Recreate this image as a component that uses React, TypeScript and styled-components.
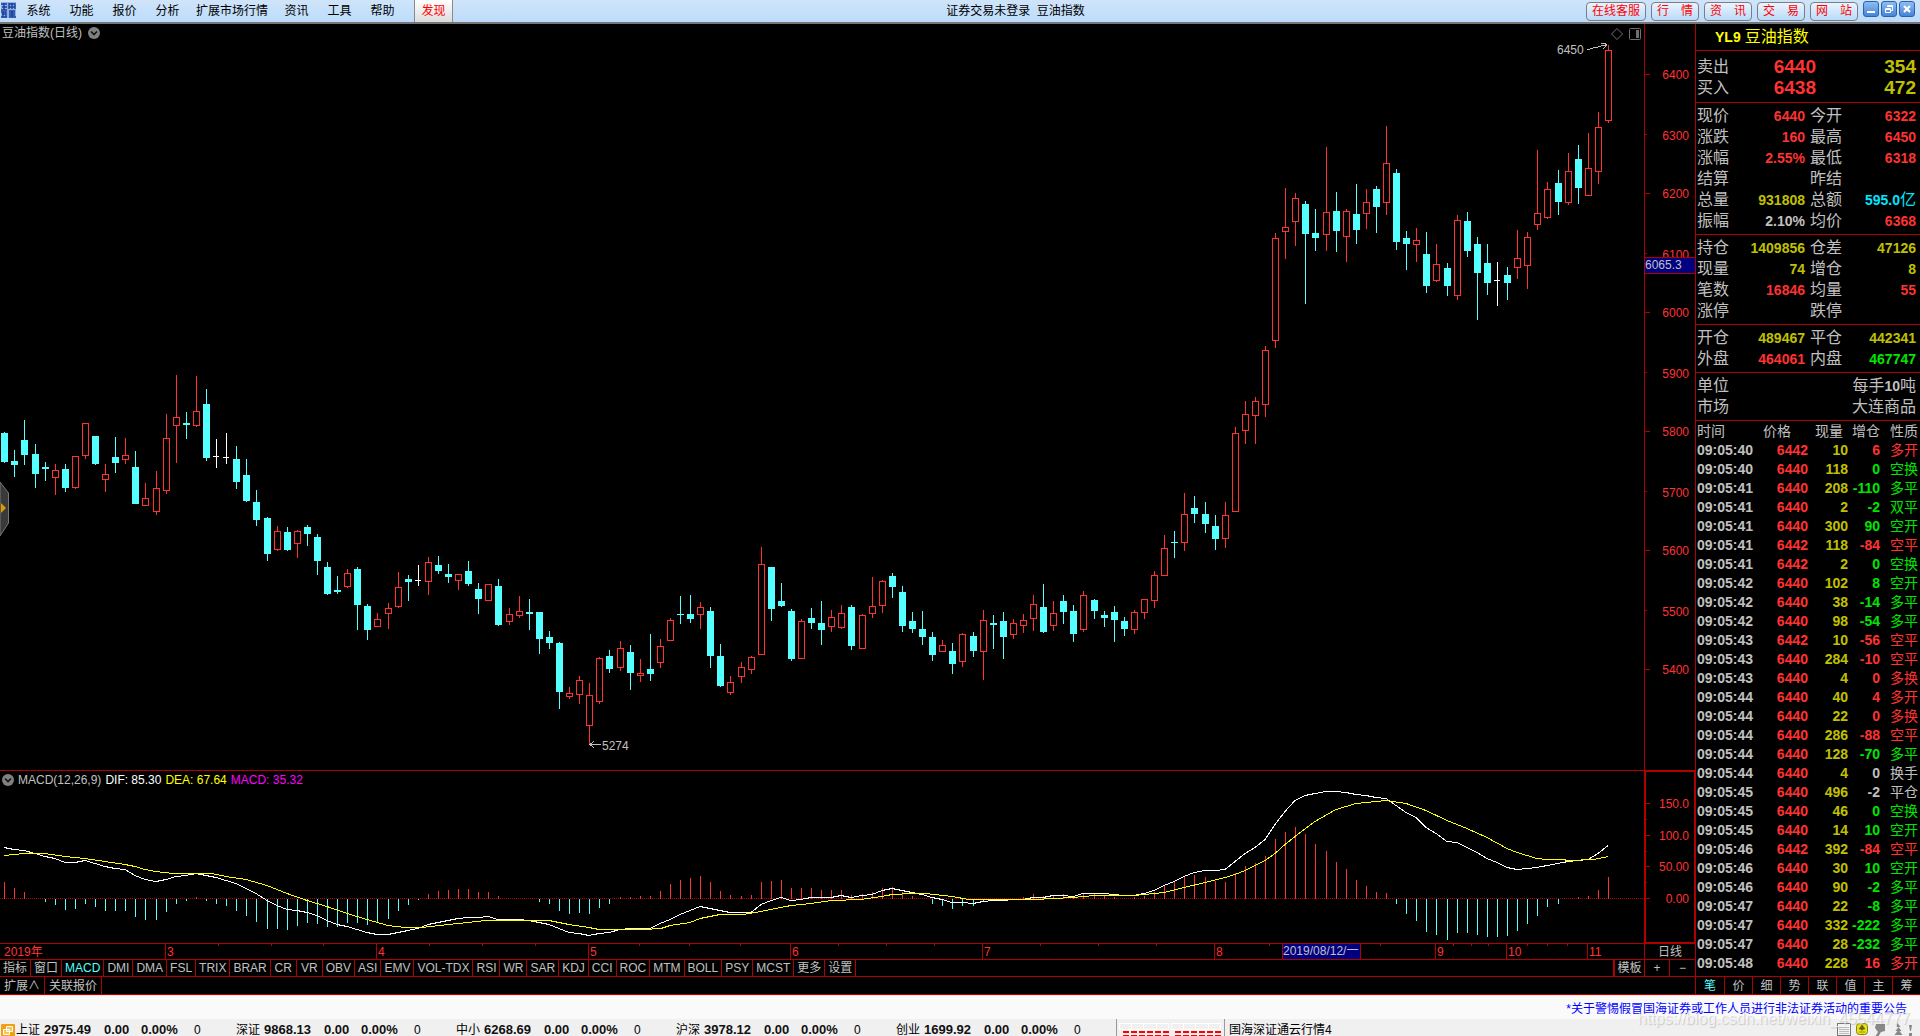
import React from 'react';
import styled, { createGlobalStyle } from 'styled-components';

const RED = '#b00000';
const UP = '#ff3232';
const DOWN = '#54ffff';
const GRAY = '#c0c0c0';
const YEL = '#c0c000';
const GREEN = '#00e600';
const FONT = '"Liberation Sans", "Noto Sans CJK SC", sans-serif';

const Global = createGlobalStyle`
  * { box-sizing: border-box; }
  body { margin: 0; background: #000; overflow: hidden; }
  button { font: inherit; color: inherit; background: none; border: 0; padding: 0; margin: 0; cursor: pointer; }
  svg { display: block; }
`;

/* ---------- data ---------- */

// u = rising, d = falling, n = unchanged; then high, body top, body bottom, low
const CANDLES = `d432,433,462,463 d450,461,465,477 d420,440,455,465 d444,454,474,488 d462,467,469,481
u464,470,478,495 d464,469,488,492 u456,456,488,489 u423,423,456,459 d436,436,464,465
u464,474,480,492 d437,457,463,473 u438,455,460,464 d451,467,504,504 u483,498,506,506
u471,488,512,515 u414,438,491,494 u375,417,426,463 d412,423,425,439 u376,411,426,427
d389,404,458,461 n439,456,457,468 n433,457,458,464 d446,459,482,489 d459,475,501,502
d490,502,520,526 d517,518,554,561 u526,531,550,551 d527,532,550,551 u530,531,544,558
d525,527,534,546 d534,537,561,575 d562,567,594,595 d576,590,592,594 u569,573,587,588
d567,569,605,630 d604,606,630,640 u613,619,627,627 u603,608,614,629 u572,587,607,608
d575,579,582,601 n565,580,581,586 u557,562,582,595 d556,565,571,574 d564,574,577,583
u574,574,581,590 d561,571,584,586 d583,589,599,614 u584,584,601,601 d579,586,625,626
u608,614,622,625 u596,611,616,618 d599,612,614,630 d612,612,639,654 d631,637,643,649
d642,643,692,709 u687,693,697,699 u676,680,695,704 u683,695,726,744 u657,658,702,704
d650,656,669,673 u641,648,668,671 d645,652,673,690 u659,673,676,682 d634,669,674,681
u639,646,663,668 u618,620,641,641 d596,614,615,624 d595,614,619,623 u602,607,615,629
d607,611,656,668 d644,656,686,687 u676,682,693,695 u662,667,677,683 u656,657,670,674
u547,564,655,655 d567,567,609,621 d583,601,606,607 d609,611,659,661 u619,621,659,659
d608,618,623,629 d601,623,630,645 u610,617,627,632 u605,613,628,629 d605,607,646,650
u614,615,649,649 u577,606,614,618 u580,581,606,613 d573,576,587,598 d586,592,626,632
d612,621,629,633 d611,629,637,645 d632,637,655,661 u640,645,652,652 d643,651,664,674
u633,634,662,667 d632,636,651,657 u610,620,652,680 d615,623,625,649 d612,621,637,659
u619,623,635,639 u614,620,626,633 u595,604,619,631 d584,607,632,633 u601,613,626,631
d595,601,612,624 d605,611,634,642 u591,595,630,632 d599,600,611,619 d611,615,618,627
d606,612,620,642 d617,621,629,636 u610,612,630,634 u599,599,613,619 u571,575,601,608
u535,548,576,576 d531,542,543,558 u493,514,543,551 d496,508,514,523 d502,514,524,533
d515,526,539,550 u502,515,539,548 u427,433,512,512 u401,414,431,444 u397,401,416,444
u346,350,405,417 u233,238,341,348 u188,227,232,259 u193,198,222,246 d201,204,234,304
d209,233,238,251 u147,212,235,251 d192,211,231,252 u209,211,237,262 d184,214,230,244
u189,202,214,229 d186,189,207,233 u126,163,203,215 d169,173,242,250 d231,238,244,270
u228,240,245,262 d232,254,286,293 u244,264,281,282 d263,268,286,296 u215,220,296,300
d212,221,251,257 d237,244,273,320 d244,263,283,295 n262,280,281,306 d267,275,283,300
u230,258,268,279 u232,237,266,289 u150,213,225,230 u182,189,218,219 d170,183,202,215
u153,171,203,205 d145,159,188,204 u133,168,196,196 u112,127,172,184 u45,50,121,123`
  .split(/\s+/)
  .map((s) => ({ dir: s[0], v: s.slice(1).split(',').map(Number) }));

const HIST = [
  16, 10, 6, 0, -3, -6, -11, -10, -5, -8, -12, -12, -12, -18, -21, -21, -13, -5, -2, 1,
  -2, -5, -7, -12, -17, -23, -30, -30, -31, -27, -24, -25, -28, -28, -24, -24, -26, -24, -20, -12,
  -6, -1, 4, 7, 8, 9, 9, 6, 6, 2, 0, 0, 0, -3, -5, -12, -15, -14, -15, -9,
  -5, 1, 1, 2, 2, 7, 14, 18, 20, 22, 16, 7, 3, 2, 3, 16, 17, 18, 10, 10,
  10, 8, 8, 8, 3, 4, 6, 10, 11, 6, 2, 0, -5, -7, -10, -7, -7, -3, 0, 0,
  0, 1, 4, 2, 3, 4, 2, 4, 4, 3, 1, 0, 1, 2, 6, 12, 16, 21, 23, 21,
  17, 16, 25, 32, 35, 42, 59, 66, 71, 64, 54, 47, 36, 29, 18, 12, 6, 5, -5, -15,
  -22, -33, -36, -41, -34, -34, -36, -38, -38, -37, -32, -25, -17, -8, -5, 0, 1, 2, 8, 21,
];

const DIF = [
  847, 849, 850, 853, 856, 858, 862, 862, 860, 863, 866, 868, 869, 875, 879, 881, 879, 876, 875, 873,
  875, 877, 880, 883, 888, 893, 900, 905, 909, 910, 912, 915, 920, 924, 926, 929, 932, 934, 934, 932,
  930, 928, 924, 922, 920, 918, 917, 917, 916, 919, 919, 919, 920, 922, 924, 928, 932, 933, 935, 933,
  932, 929, 928, 928, 928, 923, 919, 914, 910, 906, 908, 910, 912, 912, 912, 904, 900, 897, 900, 899,
  897, 897, 897, 895, 897, 895, 894, 890, 888, 890, 892, 894, 897, 899, 902, 902, 903, 901, 900, 900,
  899, 899, 897, 897, 895, 895, 896, 893, 893, 893, 894, 895, 895, 893, 890, 885, 881, 876, 872, 870,
  870, 869, 861, 853, 847, 839, 824, 811, 800, 795, 793, 791, 791, 792, 794, 795, 797, 798, 805, 812,
  817, 827, 833, 841, 842, 847, 852, 858, 862, 867, 869, 868, 867, 865, 863, 861, 860, 859, 853, 845,
];

const DEA =
  '4,855 14,854 25,853 45,853 65,856 85,858 105,861 125,864 135,866 145,869 156,871 173,873 212,873 226,876 246,879 267,885 287,893 307,900 327,906 347,913 367,919 388,925 405,927 422,927 448,924 468,922 486,920 549,920 569,924 589,927 599,929 644,929 661,928 670,925 690,922 700,918 720,914 743,914 761,911 791,905 811,903 831,900 861,899 882,896 892,894 912,893 926,893 952,896 969,899 1035,899 1073,897 1094,895 1134,895 1164,892 1184,887 1205,882 1225,877 1235,874 1245,870 1265,860 1275,853 1285,844 1295,836 1315,821 1336,809 1356,803 1386,800 1406,803 1426,810 1447,820 1467,828 1487,837 1507,848 1517,852 1537,858 1547,859 1563,859 1568,860 1594,859 1608,856';

const slotX = (i: number) => 4 + 10 * i + Math.floor((i + 8.9) / 11.62);

const MONTHS: [number, string][] = [
  [165, '3'], [376, '4'], [588, '5'], [790, '6'], [982, '7'], [1214, '8'], [1435, '9'], [1506, '10'], [1587, '11'],
];
const WEEKS = [218, 271, 323, 429, 482, 535, 639, 689, 740, 838, 886, 934, 1040, 1098, 1156, 1269, 1380, 1453, 1471, 1488, 1527, 1547, 1567];

const PRICE_TICKS: [number, string][] = [
  [74, '6400'], [134, '6300'], [193, '6200'], [253, '6100'], [312, '6000'],
  [372, '5900'], [431, '5800'], [491, '5700'], [550, '5600'], [610, '5500'], [669, '5400'],
];
const MACD_TICKS: [number, string][] = [[803, '150.0'], [835, '100.0'], [866, '50.00'], [898, '0.00']];

const MENU = ['系统', '功能', '报价', '分析', '扩展市场行情', '资讯', '工具', '帮助'];
const QUICK = ['行　情', '资　讯', '交　易', '网　站'];
const INDICATORS = ['指标', '窗口', 'MACD', 'DMI', 'DMA', 'FSL', 'TRIX', 'BRAR', 'CR', 'VR', 'OBV', 'ASI', 'EMV', 'VOL-TDX', 'RSI', 'WR', 'SAR', 'KDJ', 'CCI', 'ROC', 'MTM', 'BOLL', 'PSY', 'MCST', '更多', '设置'];

type Cell = [string, string, string];
const QUOTES: Cell[][][] = [
  [
    [['现价', '6440', UP], ['今开', '6322', UP]],
    [['涨跌', '160', UP], ['最高', '6450', UP]],
    [['涨幅', '2.55%', UP], ['最低', '6318', UP]],
    [['结算', '', UP], ['昨结', '', UP]],
    [['总量', '931808', YEL], ['总额', '595.0亿', '#00e6ff']],
    [['振幅', '2.10%', GRAY], ['均价', '6368', UP]],
  ],
  [
    [['持仓', '1409856', YEL], ['仓差', '47126', YEL]],
    [['现量', '74', YEL], ['增仓', '8', YEL]],
    [['笔数', '16846', UP], ['均量', '55', UP]],
    [['涨停', '', UP], ['跌停', '', UP]],
  ],
  [
    [['开仓', '489467', YEL], ['平仓', '442341', YEL]],
    [['外盘', '464061', UP], ['内盘', '467747', GREEN]],
  ],
];

const TRADES = `40 6442 10 6 多开 r|40 6440 118 0 空换 g|41 6440 208 -110 多平 g|41 6440 2 -2 双平 g|41 6440 300 90 空开 g|41 6442 118 -84 空平 r|41 6442 2 0 空换 g|42 6440 102 8 空开 g|42 6440 38 -14 多平 g|42 6440 98 -54 多平 g|43 6442 10 -56 空平 r|43 6440 284 -10 空平 r|43 6440 4 0 多换 r|44 6440 40 4 多开 r|44 6440 22 0 多换 r|44 6440 286 -88 空平 r|44 6440 128 -70 多平 g|44 6440 4 0 换手 w|45 6440 496 -2 平仓 w|45 6440 46 0 空换 g|45 6440 14 10 空开 g|46 6442 392 -84 空平 r|46 6440 30 10 空开 g|46 6440 90 -2 多平 g|47 6440 22 -8 多平 g|47 6440 332 -222 多平 g|47 6440 28 -232 多平 g|48 6440 228 16 多开 r`
  .split('|')
  .map((r) => r.split(' '));
const TONE: Record<string, string> = { r: UP, g: GREEN, w: GRAY };

const INDEXES = [['上证', '2975.49'], ['深证', '9868.13'], ['中小', '6268.69'], ['沪深', '3978.12'], ['创业', '1699.92']];

/* ---------- shell ---------- */

const Page = styled.div`
  height: 100vh;
  display: flex;
  flex-direction: column;
  overflow: hidden;
  font: 12px/16px ${FONT};
  color: ${GRAY};
  background: #000;
`;

const TopBar = styled.header`
  height: 24px;
  flex: none;
  display: flex;
  background: linear-gradient(#cfe4f9, #bcdcfb);
  border-bottom: 2px solid #767676;
  color: #000;
`;
const Brand = styled.div`
  width: 17px;
  padding: 2px 0 0 1px;
`;
const Menu = styled.nav`
  display: flex;
`;
const MenuItem = styled.button`
  min-width: 43px;
  padding: 0 7px;
`;
const Discover = styled.button`
  width: 39px;
  margin-left: 10px;
  color: #f00;
  background: linear-gradient(#fff, #dcdcdc);
  border-left: 1px solid #8a8a8a;
  border-right: 1px solid #8a8a8a;
`;
const Caption = styled.div`
  flex: 1;
  padding-right: 8px;
  line-height: 22px;
  text-align: center;
  white-space: pre;
`;
const Tools = styled.div`
  display: flex;
  gap: 5px;
  padding: 2px 5px 0 0;
`;
const Quick = styled.button<{ $wide?: boolean }>`
  width: ${(p) => (p.$wide ? 60 : 48)}px;
  height: 19px;
  line-height: 17px;
  border: 1px solid #7d7d7d;
  border-radius: 4px;
  color: #f00;
  background: linear-gradient(#eaf4fd, #b9dbfa);
  white-space: nowrap;
`;
const WinButtons = styled.div`
  display: flex;
  gap: 2px;
  margin-top: -1px;
`;
const WinButton = styled.button`
  width: 16px;
  height: 16px;
  border: 1px solid #2a62b0;
  border-radius: 3px;
  background: linear-gradient(#8fbdf2, #4584d8);
`;

const Main = styled.main`
  flex: 1;
  min-height: 0;
  display: flex;
  border-bottom: 1px solid ${RED};
`;
const Left = styled.section`
  flex: 1;
  min-width: 0;
  display: flex;
  flex-direction: column;
`;
const Pane = styled.div<{ $h?: number }>`
  ${(p) => (p.$h ? `height: ${p.$h}px; flex: none;` : 'flex: 1; min-height: 0;')}
  display: flex;
  border-bottom: 1px solid ${RED};
`;
const Plot = styled.div`
  position: relative;
  flex: 1;
  min-width: 0;
`;
const Canvas = styled.svg`
  width: 100%;
  height: 100%;
`;
const Scale = styled.div<{ $framed?: boolean }>`
  width: 51px;
  flex: none;
  border-left: 1px solid ${RED};
  ${(p) => p.$framed && `box-shadow: inset 1px 1px ${RED}, inset -1px -1px ${RED};`}
`;
const PaneTitle = styled.div<{ $gap: number }>`
  position: absolute;
  top: 1px;
  left: 2px;
  display: flex;
  align-items: center;
  gap: ${(p) => p.$gap}px;
  white-space: nowrap;
`;
const Legend = styled.span<{ $c: string }>`
  color: ${(p) => p.$c};
`;
const PaneTools = styled.div`
  position: absolute;
  top: 4px;
  right: 3px;
  display: flex;
  gap: 6px;
`;
const Handle = styled.button`
  position: absolute;
  left: 0;
  top: 458px;
`;

const Strip = styled.div<{ $h: number; $last?: boolean }>`
  height: ${(p) => p.$h}px;
  flex: none;
  display: flex;
  border-bottom: ${(p) => (p.$last ? 0 : 1)}px solid ${RED};
`;
const Period = styled.button`
  width: 51px;
  flex: none;
  border-left: 1px solid ${RED};
`;
const Tab = styled.button<{ $on?: boolean }>`
  min-width: 26px;
  padding: 0 3px;
  border-right: 1px solid ${RED};
  color: ${(p) => (p.$on ? DOWN : GRAY)};
  white-space: nowrap;
`;
const Spacer = styled.div`
  flex: 1;
`;
const Template = styled.button`
  width: 31px;
  flex: none;
  border-left: 2px solid ${RED};
`;
const Zoom = styled.button<{ $w: number }>`
  width: ${(p) => p.$w}px;
  flex: none;
  border-left: 1px solid ${RED};
`;
const Extra = styled(Tab)`
  padding: 0 4px;
`;

/* ---------- side panel ---------- */

const Side = styled.aside`
  width: 225px;
  flex: none;
  display: flex;
  flex-direction: column;
  border-left: 1px solid ${RED};
`;
const Name = styled.h1`
  margin: 0;
  height: 27px;
  padding-left: 19px;
  display: flex;
  align-items: center;
  gap: 4px;
  font-size: 16px;
  font-weight: 400;
  color: #ff0;
  border-bottom: 1px solid ${RED};
`;
const Block = styled.div<{ $top?: number; $bottom?: number }>`
  padding: ${(p) => p.$top ?? 2}px 4px ${(p) => p.$bottom ?? 3}px 1px;
  border-bottom: 1px solid ${RED};
`;
const Row = styled.div`
  height: 21px;
  line-height: 21px;
  display: grid;
  grid-template-columns: 108px 1fr;
  gap: 5px;
  font-size: 16px;
`;
const DepthRow = styled(Row)`
  grid-template-columns: 119px 1fr;
  gap: 0;
`;
const Pair = styled.div`
  display: flex;
  justify-content: space-between;
`;
const Val = styled.span<{ $c: string }>`
  color: ${(p) => p.$c};
  text-align: right;
  white-space: nowrap;
`;
const Num = styled.b`
  font-size: 14px;
`;
const Big = styled.b<{ $c: string }>`
  font-size: 19px;
  text-align: right;
  color: ${(p) => p.$c};
`;
const Trades = styled.table`
  width: 100%;
  table-layout: fixed;
  border-collapse: collapse;
  font-size: 14px;
  line-height: 19px;
  th, td { padding: 0; height: 19px; text-align: right; white-space: nowrap; }
  th { height: 20px; font-weight: 400; }
  td { font-weight: 700; }
  th:first-child, td:first-child { text-align: left; padding-left: 1px; }
  th:nth-child(2) { padding-right: 17px; }
  th:nth-child(3) { padding-right: 5px; }
  th:last-child, td:last-child { padding-right: 2px; font-weight: 400; }
`;
const TCell = styled.td<{ $c: string }>`
  color: ${(p) => p.$c};
`;
const SideTabs = styled.div`
  margin-top: auto;
  height: 18px;
  display: grid;
  grid-template-columns: repeat(8, 1fr);
  border-top: 1px solid ${RED};
`;
const SideTab = styled.button<{ $on?: boolean }>`
  color: ${(p) => (p.$on ? DOWN : GRAY)};
  &:not(:first-child) { border-left: 1px solid ${RED}; }
`;

/* ---------- footer ---------- */

const Notice = styled.div`
  position: relative;
  height: 24px;
  flex: none;
  padding: 5px 13px 0 0;
  text-align: right;
  background: #fafafa;
  border-top: 1px solid #fbdede;
`;
const NoticeLink = styled.a`
  color: #00f;
  text-decoration: none;
`;
const Watermark = styled.div`
  position: absolute;
  right: 10px;
  top: 13px;
  z-index: 1;
  font-size: 16px;
  line-height: 20px;
  color: rgba(255, 255, 255, 0.6);
  text-shadow: 1px 1px 1px rgba(120, 120, 120, 0.35);
  pointer-events: none;
`;
const Status = styled.footer`
  height: 17px;
  flex: none;
  display: flex;
  overflow: hidden;
  background: #f0f0f0;
  color: #000;
  line-height: 22px;
`;
const StatusIcon = styled.div`
  width: 16px;
  padding: 5px 0 0 1px;
`;
const IndexItem = styled.div`
  display: grid;
  grid-template-columns: 28px 60px 37px 53px 42px;
`;
const StatNum = styled.b`
  font-size: 13px;
  color: #111;
`;
const Meters = styled.div`
  width: 109px;
  padding: 4px 0 0 2px;
  border-left: 1px solid #999;
  border-right: 1px solid #999;
`;
const Host = styled.div`
  padding-left: 4px;
`;
const Tray = styled.div`
  padding: 4px 7px 0 0;
`;

/* ---------- pieces ---------- */

const Round = () => (
  <svg width="12" height="12" viewBox="0 0 12 12">
    <circle cx="6" cy="6" r="6" fill="#808080" />
    <path d="M3 4.5 L6 7.5 L9 4.5" fill="none" stroke="#111" strokeWidth="1.6" />
  </svg>
);

const Mixed = ({ text }: { text: string }) => (
  <>
    {text.split(/([\d.%]+)/).map((s, i) => (i % 2 ? <Num key={i}>{s}</Num> : s))}
  </>
);

const PriceChart = () => (
  <Canvas viewBox="0 24 1644 746" preserveAspectRatio="none" shapeRendering="crispEdges">
    {CANDLES.map(({ dir, v: [hi, top, bot, lo] }, i) => {
      const x = slotX(i);
      const c = dir === 'u' ? UP : dir === 'd' ? DOWN : '#fff';
      return (
        <g key={i} fill={c}>
          <rect x={x} y={hi} width={1} height={top - hi} />
          <rect x={x} y={bot} width={1} height={lo - bot} />
          {dir === 'u' ? (
            <rect x={x - 2.5} y={top + 0.5} width={6} height={bot - top - 1} fill="none" stroke={c} />
          ) : (
            <rect x={x - 3} y={top} width={dir === 'd' ? 7 : 6} height={bot - top} />
          )}
        </g>
      );
    })}
    <g stroke={GRAY} fill="none">
      <path d="M1587 49.500H1589L1594 47.500H1597L1602 45.500H1607M1601 43.500H1605L1607 45L1603 49" />
      <path d="M590 744.500H601M594 741L590 744.500L594 748" />
    </g>
    <g fill={GRAY} fontSize="12" fontFamily={FONT}>
      <text x="1557" y="54">6450</text>
      <text x="602" y="750">5274</text>
    </g>
  </Canvas>
);

const MacdChart = () => (
  <Canvas viewBox="0 771 1644 172" preserveAspectRatio="none" shapeRendering="crispEdges">
    <line x1="0" x2="1644" y1="898.500" y2="898.500" stroke={RED} strokeDasharray="1 1" />
    {HIST.map((h, i) =>
      h > 0 ? (
        <rect key={i} x={slotX(i)} y={898 - h} width={1} height={h + 1} fill={UP} />
      ) : h < 0 ? (
        <rect key={i} x={slotX(i)} y={899} width={1} height={-h} fill={DOWN} />
      ) : null
    )}
    <polyline points={DIF.map((y, i) => `${slotX(i)},${y + 0.5}`).join(' ')} fill="none" stroke="#fff" />
    <polyline points={DEA} transform="translate(0 .5)" fill="none" stroke="#ff0" />
  </Canvas>
);

const PriceScale = () => (
  <Canvas viewBox="1645 24 50 746" preserveAspectRatio="none" shapeRendering="crispEdges">
    {PRICE_TICKS.map(([y, t], i) => (
      <g key={t}>
        <rect x="1645" y={y} width={i % 2 ? 2 : 5} height="1" fill={RED} />
        <text x="1689" y={y + (i % 2 ? 6 : 5)} fill={UP} fontSize="12" fontFamily={FONT} textAnchor="end">{t}</text>
      </g>
    ))}
    <rect x="1645" y="257" width="50" height="17" fill={RED} />
    <rect x="1645" y="258" width="50" height="15" fill="#000080" />
    <text x="1645" y="269" fill={GRAY} fontSize="12" fontFamily={FONT}>6065.3</text>
  </Canvas>
);

const MacdScale = () => (
  <Canvas viewBox="1645 771 50 172" preserveAspectRatio="none" shapeRendering="crispEdges">
    {MACD_TICKS.map(([y, t]) => (
      <g key={t}>
        <rect x="1645" y={y} width="5" height="1" fill={RED} />
        <text x="1689" y={y + 5} fill={UP} fontSize="12" fontFamily={FONT} textAnchor="end">{t}</text>
      </g>
    ))}
    {[819, 851, 882].map((y) => <rect key={y} x="1645" y={y} width="2" height="1" fill={RED} />)}
  </Canvas>
);

const TimeAxis = () => (
  <Canvas viewBox="0 944 1644 15" preserveAspectRatio="none" shapeRendering="crispEdges">
    {WEEKS.map((x) => <rect key={x} x={x} y="944" width="1" height="2" fill={RED} />)}
    <g fontSize="12" fontFamily={FONT} fill={UP}>
      <text x="4" y="956">2019年</text>
      {MONTHS.map(([x, t]) => (
        <g key={t}>
          <rect x={x} y="944" width="1" height="15" fill={RED} />
          <text x={x + 2} y="956">{t}</text>
        </g>
      ))}
      <rect x="1282" y="944" width="79" height="15" fill="#000080" />
      <rect x="1282" y="944" width="1" height="15" fill={RED} />
      <rect x="1360" y="944" width="1" height="15" fill={RED} />
      <text x="1283" y="955" fill={GRAY}>2019/08/12/一</text>
    </g>
  </Canvas>
);

export default function App() {
  return (
    <Page>
      <Global />
      <TopBar>
        <Brand>
          <svg width="15" height="16" viewBox="0 0 15 16" fill="none" stroke="#1c3f9a" strokeWidth="1.400">
            <rect width="15" height="16" fill="#8fb2e4" stroke="none" />
            <path d="M0 2h6M1 5h5M0 8h6M3 1v7M8 1v6M8 2h6v5M11 1v6M8 5h6M0 10h5v5M1 12h4M0 15h6M8 9h6M8 11h6M8 13h6M8 15h7M11 9v6M2 10v5" />
          </svg>
        </Brand>
        <Menu>
          {MENU.map((m) => <MenuItem key={m}>{m}</MenuItem>)}
          <Discover>发现</Discover>
        </Menu>
        <Caption>{'证券交易未登录  豆油指数'}</Caption>
        <Tools>
          <Quick $wide>在线客服</Quick>
          {QUICK.map((q) => <Quick key={q}>{q}</Quick>)}
          <WinButtons>
            <WinButton aria-label="最小化">
              <svg width="14" height="14" viewBox="0 0 14 14"><rect x="3" y="9" width="8" height="2" fill="#fff" /></svg>
            </WinButton>
            <WinButton aria-label="还原">
              <svg width="14" height="14" viewBox="0 0 14 14" fill="none" stroke="#fff">
                <path d="M5.500 5V3.500H10.500V8.500H9M5.500 4.500H10.500M3.500 6.500H8.500V10.500H3.500ZM3.500 7.500H8.500" />
              </svg>
            </WinButton>
            <WinButton aria-label="关闭">
              <svg width="14" height="14" viewBox="0 0 14 14"><path d="M4 4L10 10M10 4L4 10" stroke="#fff" strokeWidth="2.200" /></svg>
            </WinButton>
          </WinButtons>
        </Tools>
      </TopBar>

      <Main>
        <Left>
          <Pane>
            <Plot>
              <PriceChart />
              <PaneTitle $gap={6}>豆油指数(日线)<Round /></PaneTitle>
              <PaneTools>
                <svg width="12" height="12" viewBox="0 0 12 12"><path d="M6 .5L11.500 6L6 11.500L.5 6Z" fill="none" stroke="#707070" /></svg>
                <svg width="12" height="12" viewBox="0 0 12 12"><rect x=".5" y=".5" width="11" height="11" rx="1" fill="none" stroke="#707070" /><rect x="7" y="2" width="3" height="8" fill="#707070" /></svg>
              </PaneTools>
              <Handle aria-label="展开侧栏">
                <svg width="9" height="55" viewBox="0 0 9 55">
                  <path d="M0 0L8.500 11V41L0 54Z" fill="#3a3a3a" stroke="#777" />
                  <path d="M1 21L6 26L1 31Z" fill="#e09a00" />
                </svg>
              </Handle>
            </Plot>
            <Scale><PriceScale /></Scale>
          </Pane>
          <Pane $h={173}>
            <Plot>
              <MacdChart />
              <PaneTitle $gap={4}>
                <Round />
                <span>MACD(12,26,9)</span>
                <Legend $c="#fff">DIF: 85.30</Legend>
                <Legend $c="#ff0">DEA: 67.64</Legend>
                <Legend $c="#f0f">MACD: 35.32</Legend>
              </PaneTitle>
            </Plot>
            <Scale $framed><MacdScale /></Scale>
          </Pane>
          <Strip $h={16}>
            <Plot><TimeAxis /></Plot>
            <Period>日线</Period>
          </Strip>
          <Strip $h={17}>
            {INDICATORS.map((t) => <Tab key={t} $on={t === 'MACD'}>{t}</Tab>)}
            <Spacer />
            <Template>模板</Template>
            <Zoom $w={25}>+</Zoom>
            <Zoom $w={26}>−</Zoom>
          </Strip>
          <Strip $h={17} $last>
            <Extra>扩展∧</Extra>
            <Extra>关联报价</Extra>
          </Strip>
        </Left>

        <Side>
          <Name><Num>YL9</Num>豆油指数</Name>
          <Block $top={5} $bottom={4}>
            <DepthRow><Pair><span>卖出</span><Big $c={UP}>6440</Big></Pair><Big $c={YEL}>354</Big></DepthRow>
            <DepthRow><Pair><span>买入</span><Big $c={UP}>6438</Big></Pair><Big $c={YEL}>472</Big></DepthRow>
          </Block>
          {QUOTES.map((rows, i) => (
            <Block key={i}>
              {rows.map((cells) => (
                <Row key={cells[0][0]}>
                  {cells.map(([k, v, c]) => (
                    <Pair key={k}><span>{k}</span><Val $c={c}><Mixed text={v} /></Val></Pair>
                  ))}
                </Row>
              ))}
            </Block>
          ))}
          <Block>
            <DepthRow><span>单位</span><Val $c={GRAY}><Mixed text="每手10吨" /></Val></DepthRow>
            <DepthRow><span>市场</span><Val $c={GRAY}>大连商品</Val></DepthRow>
          </Block>
          <Trades>
            <colgroup>
              <col style={{ width: 66 }} /><col style={{ width: 46 }} /><col style={{ width: 40 }} /><col style={{ width: 32 }} /><col />
            </colgroup>
            <thead><tr><th>时间</th><th>价格</th><th>现量</th><th>增仓</th><th>性质</th></tr></thead>
            <tbody>
              {TRADES.map(([s, p, v, d, k, t], i) => (
                <tr key={i}>
                  <TCell $c={GRAY}>09:05:{s}</TCell>
                  <TCell $c={UP}>{p}</TCell>
                  <TCell $c={YEL}>{v}</TCell>
                  <TCell $c={TONE[t]}>{d}</TCell>
                  <TCell $c={TONE[t]}>{k}</TCell>
                </tr>
              ))}
            </tbody>
          </Trades>
          <SideTabs>
            {'笔价细势联值主筹'.split('').map((t, i) => <SideTab key={t} $on={i === 0}>{t}</SideTab>)}
          </SideTabs>
        </Side>
      </Main>

      <Notice>
        <NoticeLink href="#">*关于警惕假冒国海证券或工作人员进行非法证券活动的重要公告</NoticeLink>
        <Watermark>https://blog.csdn.net/weixin_45544777</Watermark>
      </Notice>
      <Status>
        <StatusIcon>
          <svg width="14" height="14" viewBox="0 0 14 14">
            <rect width="14" height="14" rx="1" fill="#f0a010" />
            <path d="M5.500 2.500h6v5h-6zM2.500 5.500h6v5h-6z" fill="#f7c45a" stroke="#fff" />
          </svg>
        </StatusIcon>
        {INDEXES.map(([n, v]) => (
          <IndexItem key={n}>
            <span>{n}</span><StatNum>{v}</StatNum><StatNum>0.00</StatNum><StatNum>0.00%</StatNum><span>0</span>
          </IndexItem>
        ))}
        <Meters>
          <svg width="104" height="14" viewBox="0 0 104 14" shapeRendering="crispEdges">
            {[0, 52].map((o) => (
              <g key={o} fill="none" stroke="#fff">
                <rect x={o + 0.5} y=".5" width="49" height="6" />
                <path d={`M${o + 12.5} 0v7M${o + 24.5} 0v7M${o + 37.5} 0v7`} />
                {[0, 1, 2, 3, 4, 5].map((k) => (
                  <path key={k} d={`M${o + 4 + k * 8} 8h6v2h-6zM${o + 4 + k * 8} 12h6v2h-6z`} fill="#f00" stroke="none" />
                ))}
              </g>
            ))}
          </svg>
        </Meters>
        <Host>国海深证通云行情4</Host>
        <Spacer />
        <Tray>
          <svg width="76" height="14" viewBox="0 0 76 14">
            <rect x=".5" y=".5" width="13" height="12" fill="#f4f4f4" stroke="#777" />
            <path d="M2 4.500h10M2 6.500h10M2 8.500h10M2 10.500h10" stroke="#bbb" />
            <rect x="19.500" y=".5" width="11" height="11" rx="3" fill="#e8e020" stroke="#8a8400" />
            <path d="M25 2L28 6H26V7H24V6H22ZM22 9h6" fill="#6a6400" stroke="#6a6400" strokeWidth=".6" />
            <path d="M39 1h9v7l-4 1-3 5h-3l3-5-3-4z" fill="#888" />
            <path d="M60.500 0l3 4h-2l3 4h-2l3 4h-8l3-4h-2l3-4h-2z" fill="#888" />
            <path d="M72 2h3l-1 6h-1zM72 10h3v3h-3z" fill="#888" />
          </svg>
        </Tray>
      </Status>
    </Page>
  );
}
